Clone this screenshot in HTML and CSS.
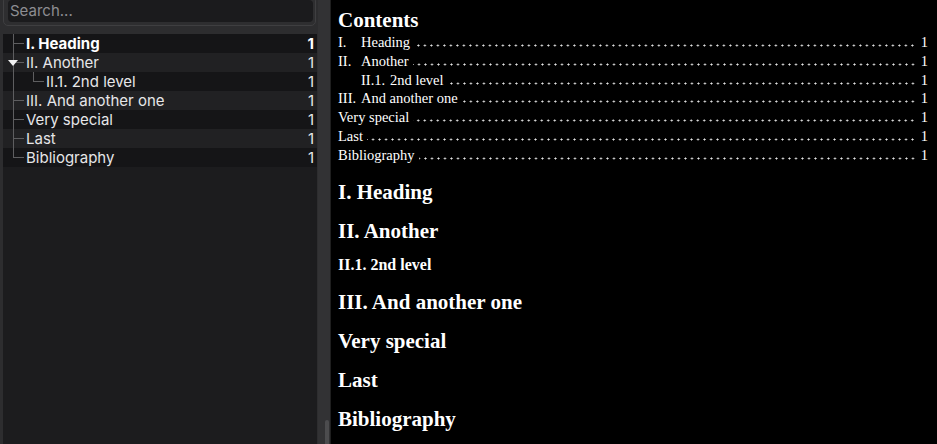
FILE: index.html
```html
<!DOCTYPE html>
<html lang="en">
<head>
<meta charset="utf-8">
<title>Outline</title>
<link rel="stylesheet" href="styles.css">
</head>
<body>
<div class="app">
  <aside class="sidebar">
    <div class="search-frame"><div class="search">Search...</div></div>
    <ul class="tree">
      <li class="row odd sel"><span class="guide tee"></span><span class="label">I. Heading</span><span class="count">1</span></li>
      <li class="row even"><span class="guide tee"><span class="caret"></span></span><span class="label">II. Another</span><span class="count">1</span></li>
      <li class="row odd"><span class="guide pipe"></span><span class="guide2 elbow2"></span><span class="label">II.1. 2nd level</span><span class="count">1</span></li>
      <li class="row even"><span class="guide tee"></span><span class="label">III. And another one</span><span class="count">1</span></li>
      <li class="row odd"><span class="guide tee"></span><span class="label">Very special</span><span class="count">1</span></li>
      <li class="row even"><span class="guide tee"></span><span class="label">Last</span><span class="count">1</span></li>
      <li class="row odd"><span class="guide elbow"></span><span class="label">Bibliography</span><span class="count">1</span></li>
    </ul>
  </aside>
  <div class="gutter"><div class="thumb"></div></div>
  <main class="doc">
    <h2 class="toc-title">Contents</h2>
    <div class="toc">
      <div class="toc-row"><span class="num">I.</span><span class="t">Heading</span><span class="leader"></span><span class="pg">1</span></div>
      <div class="toc-row"><span class="num">II.</span><span class="t">Another</span><span class="leader"></span><span class="pg">1</span></div>
      <div class="toc-row l2"><span class="num n2">II.1.</span><span class="t">2nd level</span><span class="leader"></span><span class="pg">1</span></div>
      <div class="toc-row"><span class="num">III.</span><span class="t">And another one</span><span class="leader"></span><span class="pg">1</span></div>
      <div class="toc-row"><span class="t">Very special</span><span class="leader"></span><span class="pg">1</span></div>
      <div class="toc-row"><span class="t">Last</span><span class="leader"></span><span class="pg">1</span></div>
      <div class="toc-row"><span class="t">Bibliography</span><span class="leader"></span><span class="pg">1</span></div>
    </div>
    <h1 class="h first">I. Heading</h1>
    <h1 class="h">II. Another</h1>
    <h2 class="h sub">II.1. 2nd level</h2>
    <h1 class="h">III. And another one</h1>
    <h1 class="h">Very special</h1>
    <h1 class="h">Last</h1>
    <h1 class="h">Bibliography</h1>
  </main>
</div>
</body>
</html>
```

FILE: styles.css
```css
html, body {
  margin: 0;
  padding: 0;
  width: 937px;
  height: 444px;
  overflow: hidden;
  background: #000;
}

.app {
  display: flex;
  height: 444px;
}

/* ---------- sidebar ---------- */
.sidebar {
  width: 318px;
  flex: none;
  background: #2d2d2f;
  font-family: Inter, "Noto Sans", sans-serif;
  display: flex;
  flex-direction: column;
  overflow: hidden;
}

.search-frame {
  margin: -4px 2px 0 3px;
  padding: 3px 2px 3px 4px;
  border: 1px solid #3f3f41;
  border-radius: 5px;
  background: #2e2e30;
}

.search {
  height: 22px;
  line-height: 22px;
  padding-left: 2px;
  background: #1b1b1d;
  border-radius: 4px;
  color: #8d8d92;
  font-size: 15px;
}

.tree {
  list-style: none;
  margin: 8px 1px 0 3px;
  padding: 0;
  flex: 1;
  background: #1c1c1e;
  --ln: #5e5e60;
}

.row {
  display: flex;
  align-items: center;
  height: 19px;
  line-height: 19px;
  font-size: 15px;
  color: #e6e6e8;
  padding-right: 3px;
}

.row.odd { background: #151517; }
.row.even { background: #212123; }

.row.sel { color: #fff; font-weight: 700; }

.guide {
  flex: none;
  width: 23px;
  align-self: stretch;
  display: flex;
  align-items: center;
}

.guide2 {
  flex: none;
  width: 20px;
  align-self: stretch;
}

.tee {
  background:
    linear-gradient(var(--ln), var(--ln)) 10px 0 / 1px 100% no-repeat,
    linear-gradient(var(--ln), var(--ln)) 10px 9px / 11px 1px no-repeat;
}

.pipe {
  background: linear-gradient(var(--ln), var(--ln)) 10px 0 / 1px 100% no-repeat;
}

.elbow {
  background:
    linear-gradient(var(--ln), var(--ln)) 10px 0 / 1px 10px no-repeat,
    linear-gradient(var(--ln), var(--ln)) 10px 9px / 11px 1px no-repeat;
}

.elbow2 {
  background:
    linear-gradient(var(--ln), var(--ln)) 7px 0 / 1px 10px no-repeat,
    linear-gradient(var(--ln), var(--ln)) 7px 9px / 11px 1px no-repeat;
}

.caret {
  margin-left: 5px;
  width: 0;
  height: 0;
  border-left: 5px solid transparent;
  border-right: 5px solid transparent;
  border-top: 6px solid #f2f2f2;
}

.label {
  flex: 1;
  white-space: nowrap;
}

.count {
  flex: none;
}

/* ---------- gutter ---------- */
.gutter {
  width: 12px;
  flex: none;
  background: #323234;
  display: flex;
  flex-direction: column;
  justify-content: flex-end;
}

.thumb {
  width: 4px;
  height: 24px;
  margin-left: 7px;
  background: #4c4c4e;
  border-radius: 2px 2px 0 0;
}

/* ---------- document ---------- */
.doc {
  flex: 1;
  background: #000;
  border-left: 1px solid #1f1f1f;
  padding: 0 9px 0 7px;
  color: #fff;
  font-family: "Liberation Serif", "Times New Roman", serif;
  overflow: hidden;
}

.toc-title {
  margin: 0;
  padding-top: 7px;
  font-size: 21px;
  line-height: 26px;
  font-weight: 700;
}

.toc-row {
  display: flex;
  height: 18.8px;
  line-height: 18.8px;
  font-size: 14.5px;
  white-space: nowrap;
}

.toc-row.l2 { padding-left: 23px; }

.num {
  flex: none;
  width: 23px;
}

.num.n2 { width: 29px; }

.leader {
  flex: 1;
  margin: 0 5px 0 4px;
  background: radial-gradient(circle at center, #e6e6e6 0.8px, transparent 1.25px) right 0 top 11px / 6.5px 3px repeat-x;
}

.pg { flex: none; }

.h {
  margin: 0;
  font-weight: 700;
  font-size: 21px;
  line-height: 39px;
}

.h.first { margin-top: 8px; }

.h.sub {
  font-size: 16px;
  line-height: 29px;
  margin-top: -1px;
  margin-bottom: 4px;
}
```
